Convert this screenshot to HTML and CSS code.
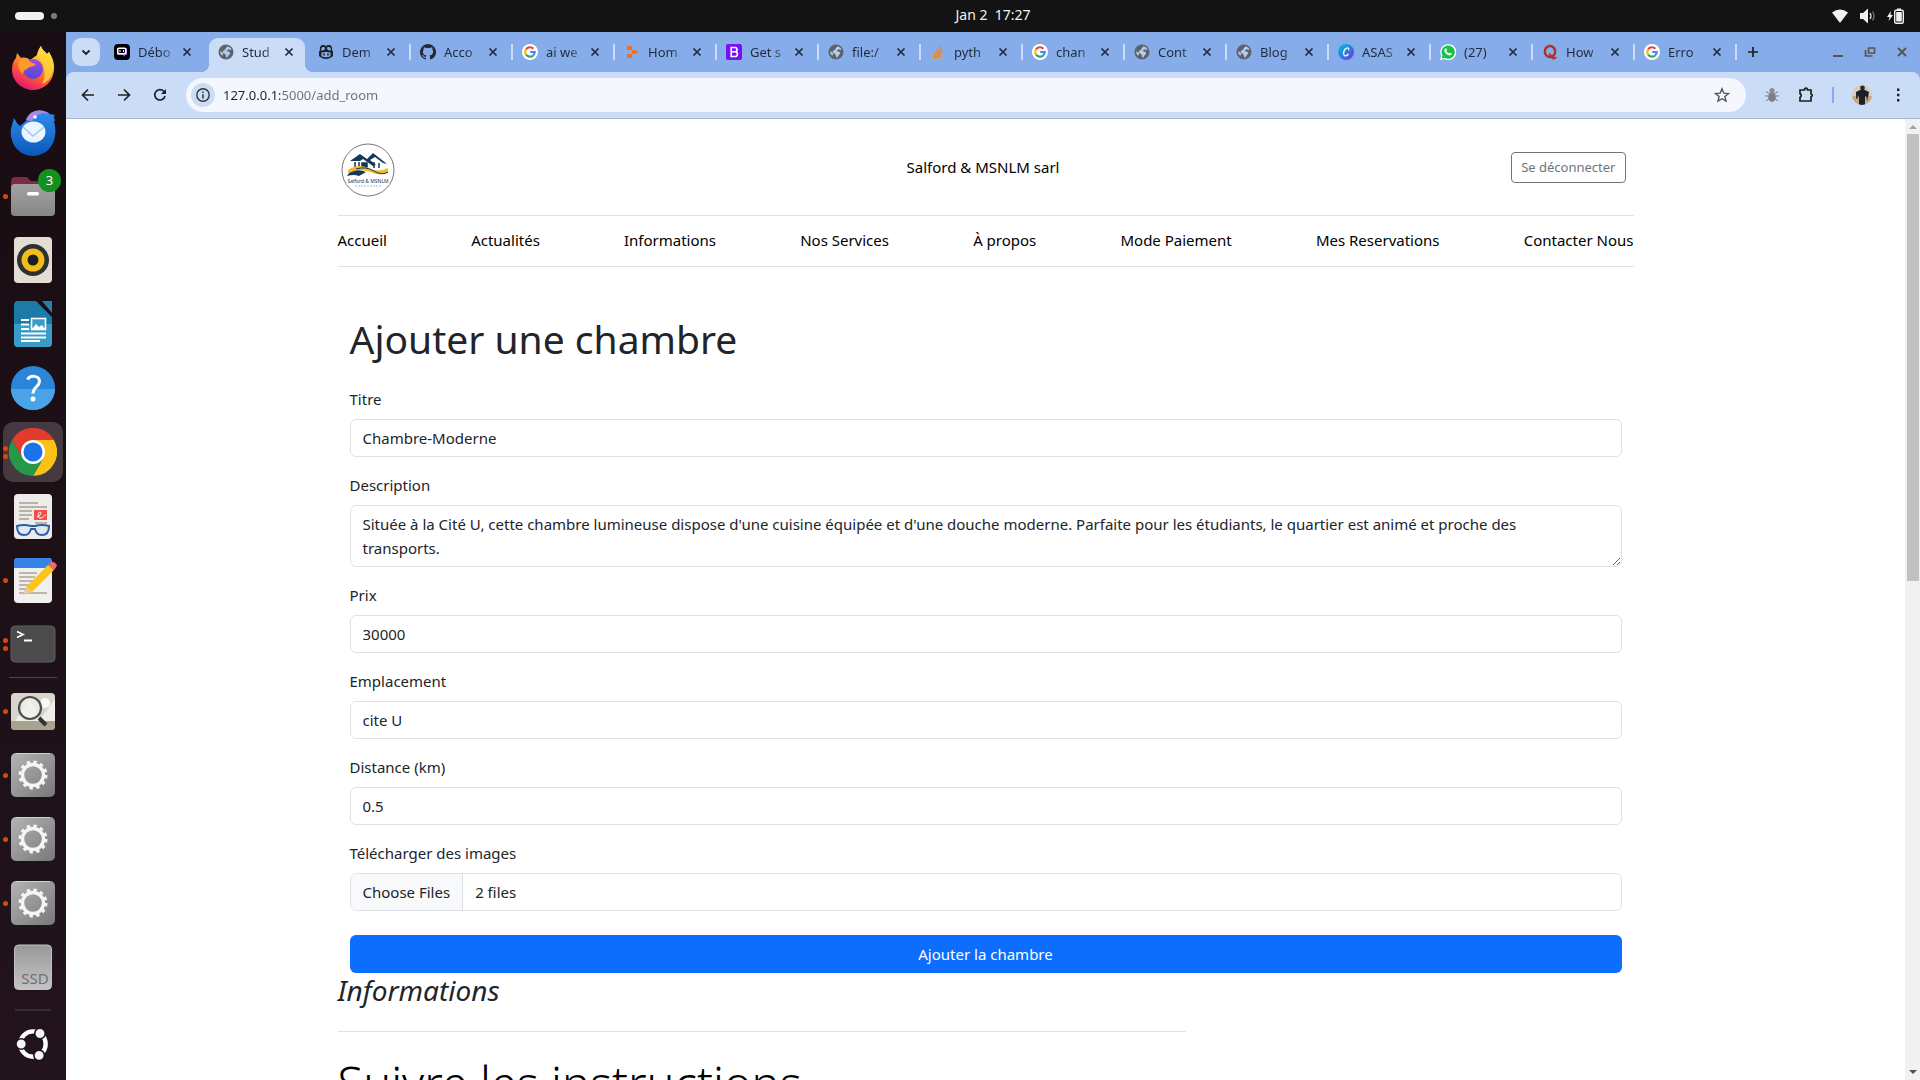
FILE: index.html
```html
<!DOCTYPE html>
<html lang="fr">
<head>
<meta charset="utf-8">
<meta name="viewport" content="width=device-width, initial-scale=1">
<title>Ajouter une chambre</title>
<link rel="stylesheet" href="styles.css">
</head>
<body>
<svg class="defs" aria-hidden="true">
  <defs>
    <linearGradient id="gFire" x1="0.8" y1="0" x2="0.3" y2="1"><stop offset="0" stop-color="#fff44f"/><stop offset=".35" stop-color="#ffb02e"/><stop offset=".65" stop-color="#ff5a36"/><stop offset="1" stop-color="#e3107a"/></linearGradient>
    <linearGradient id="gPurple" x1="0" y1="0" x2="0" y2="1"><stop offset="0" stop-color="#a34be0"/><stop offset="1" stop-color="#4f4ad8"/></linearGradient>
    <linearGradient id="gBird" x1="0" y1="0" x2="0" y2="1"><stop offset="0" stop-color="#2f8df0"/><stop offset="1" stop-color="#0b57b8"/></linearGradient>
    <linearGradient id="gGrey" x1="0" y1="0" x2="1" y2="1"><stop offset="0" stop-color="#b4b4b4"/><stop offset="1" stop-color="#787878"/></linearGradient>
    <linearGradient id="gFolder" x1="0" y1="0" x2="0" y2="1"><stop offset="0" stop-color="#a2a2a2"/><stop offset="1" stop-color="#868686"/></linearGradient>
    <linearGradient id="gSsd" x1="0" y1="0" x2="0" y2="1"><stop offset="0" stop-color="#989898"/><stop offset="1" stop-color="#c4c4c4"/></linearGradient>
    <linearGradient id="gCanva" x1="0" y1="0" x2="1" y2="1"><stop offset="0" stop-color="#00c4cc"/><stop offset=".5" stop-color="#2a80e0"/><stop offset="1" stop-color="#7d2ae8"/></linearGradient>
    <symbol id="globe" viewBox="0 0 16 16"><circle cx="8" cy="8" r="7.500" fill="#5f6368"/><path d="M9 2.200c2 .3 3.700 1.500 4.500 3.300-1 .8-2 .3-2.500-.5-.4.700-1.300.8-2 1.300-.8.700.3 1.200 1.200 1.200 1.300 0 2 .8 1.800 2-.1 1-1 1.200-1.500 2-.4.800-1 2-2.300 2.200.4-1.400-.6-2-.6-3 0-1-1.400-1-2.400-1.800C4 7.800 5.300 6.400 6.500 6c1-.3.6-1.200 1.300-1.800.5-.5 1.400-1 1.200-2zM2.200 7.500c1 .2 2.400.8 2.800 1.900.3.900-.4 1.300-.4 2.400C3 11 2.100 9.300 2.200 7.500z" fill="#b4cbf0"/></symbol>
    <symbol id="google" viewBox="0 0 16 16"><circle cx="8" cy="8" r="8" fill="#fff"/><g fill="none" stroke-width="2.200"><path d="M11.400 4.700A4.700 4.700 0 0 0 4 5.500" stroke="#ea4335"/><path d="M4 5.500a4.700 4.700 0 0 0 0 5" stroke="#fbbc05"/><path d="M4 10.500a4.700 4.700 0 0 0 7 1.100" stroke="#34a853"/><path d="M11 11.600A4.600 4.600 0 0 0 12.700 8H8.200" stroke="#4285f4"/></g></symbol>
    <symbol id="x" viewBox="0 0 16 16"><path d="M4.500 4.500l7 7M11.500 4.500l-7 7" stroke="currentColor" stroke-width="1.700"/></symbol>
    <symbol id="gear" viewBox="0 0 48 48"><rect x="2" y="2" width="44" height="44" rx="5" fill="url(#gGrey)"/><path d="M7 2.500h34" stroke="#d0d0d0"/><circle cx="24" cy="24" r="13" fill="none" stroke="#f6f5f4" stroke-width="3" stroke-dasharray="3.400 3.410"/><circle cx="24" cy="24" r="10.500" fill="none" stroke="#f6f5f4" stroke-width="3.400"/></symbol>
  </defs>
</svg>

<header class="topbar">
  <button class="workspaces" aria-label="Workspaces"><span class="pill"></span><span class="dot"></span></button>
  <time class="clock">Jan 2&nbsp; 17:27</time>
  <div class="status">
    <svg width="18" height="16" viewBox="0 0 18 16"><path d="M1 4.500Q9-1.500 17 4.500L9 15z" fill="#f2f2f2"/></svg>
    <svg width="18" height="16" viewBox="0 0 18 16"><path d="M1 5h3l5-4.500v15L4 11H1z" fill="#f2f2f2"/><path d="M11 5q2 3 0 6" fill="none" stroke="#ddd" stroke-width="1.300"/><path d="M13.500 3.500q3 4.500 0 9" fill="none" stroke="#777" stroke-width="1.300"/></svg>
    <svg width="18" height="16" viewBox="0 0 18 16"><path d="M4 3L0 9h2.500L1.500 13 6 7H3.500z" fill="#f2f2f2"/><rect x="7.700" y="2.200" width="8.600" height="13" rx="1.500" fill="none" stroke="#f2f2f2" stroke-width="1.400"/><path d="M10 .5h4v2h-4zM9.200 4h5.600v9.500H9.200z" fill="#f2f2f2"/></svg>
  </div>
</header>

<div class="desktop">
  <nav class="dock" aria-label="Dock">
    <button class="app" aria-label="Firefox"><svg viewBox="0 0 48 48"><path d="M28 11C29 6 31 3.500 32 2c1 4 4 5 6 8l2-2c3 5 6 11 5 18-1 12-10 20-21 20S3 37 3 26c0-6 2-10 4-12l1-5 4 5c4-1 7 0 9 2z" fill="url(#gFire)"/><path d="M28 11C29 6 31 3.500 32 2c1 4 4 5 6 8l2-2c4 7 6 15 2 24-3 5-6 7-9 8 5-9 3-20-5-29z" fill="#ffd43a" opacity=".8"/><circle cx="24" cy="25" r="10" fill="url(#gPurple)"/><path d="M10 17c6-3 10-1 13 2l4 1c-2 3-6 2-8 4s-5 2-5 6c-4-3-6-8-4-13z" fill="#ff9a2b"/></svg></button>
    <button class="app" aria-label="Thunderbird"><svg viewBox="0 0 48 48"><path d="M18 12c3-9 14-12 22-6l6 1c-2 2-1 3 0 5l-1 2c4 12 0 33-21 34C8 48-2 31 3 17l2-7c2 3 3 6 6 8z" fill="url(#gBird)"/><path d="M17 12C20 2 32-1 41 6c-8-2-14 0-18 7z" fill="#a58ae8"/><circle cx="26" cy="9" r="1.800" fill="#fff"/><ellipse cx="24.500" cy="24" rx="12" ry="10.500" fill="#e9f5ff"/><path d="M14 19l10 9 11-9" fill="none" stroke="#9ccaf0" stroke-width="1.500"/></svg></button>
    <button class="app" aria-label="Fichiers"><svg viewBox="0 0 48 48"><path d="M2 10q0-5 4-5h12l4 4h20q4 0 4 4v10H2z" fill="#7d2a43"/><rect x="2" y="12" width="44" height="32" rx="4" fill="url(#gFolder)"/><rect x="18" y="20" width="12" height="3.500" rx="1.500" fill="#fff"/></svg><span class="badge">3</span><span class="runs"><i></i></span></button>
    <button class="app" aria-label="Rhythmbox"><svg viewBox="0 0 48 48"><rect x="5" y="1" width="38" height="46" rx="4" fill="#e3ddd3"/><circle cx="24" cy="24" r="16" fill="#2e3033"/><circle cx="24" cy="24" r="11.500" fill="#f2bd18"/><circle cx="24" cy="24" r="5.500" fill="#1d1d1f"/></svg></button>
    <button class="app" aria-label="LibreOffice Writer"><svg viewBox="0 0 48 48"><path d="M9 1h18l16 16v26q0 4-4 4H9q-4 0-4-4V5q0-4 4-4z" fill="#1b7aa8"/><path d="M5 24h38v19q0 4-4 4H9q-4 0-4-4z" fill="#3a9cc8"/><path d="M33 1h10v12z" fill="#2483ae"/><path d="M12 20h8m-8 4.500h8m-8 4.500h8m-8 4.500h25M12 37.500h25M12 41h19" stroke="#fff" stroke-width="2"/><rect x="22.500" y="18.500" width="14" height="11" fill="#3a9cc8" stroke="#fff" stroke-width="1.600"/><path d="M23 29l4-5 3 3 3-2 3 4z" fill="#fff"/></svg></button>
    <button class="app" aria-label="Aide"><svg viewBox="0 0 48 48"><circle cx="24" cy="24" r="22" fill="#2b86d9"/><path d="M2 25a22 21 0 0 0 44 0z" fill="#4aa3e8"/><path d="M18.500 15.500C21 11 30.500 11 30.500 17.500c0 5-6.500 5.500-6.500 12" fill="none" stroke="#fff" stroke-width="3"/><circle cx="24" cy="35" r="2.500" fill="#fff"/></svg></button>
    <button class="app current" aria-label="Google Chrome"><svg viewBox="0 0 48 48"><path d="M24 24L3.200 12A24 24 0 0 1 44.800 12z" fill="#e33b2e"/><path d="M24 12h20.800A24 24 0 0 1 24 48l10.400-18z" fill="#fbc116"/><path d="M13.600 30L3.200 12A24 24 0 0 0 24 48l10.400-18z" fill="#279847"/><path d="M3.200 12A24 24 0 0 1 44.800 12H24L13.600 30z" fill="#e33b2e"/><circle cx="24" cy="24" r="12" fill="#fff"/><circle cx="24" cy="24" r="9.500" fill="#1a73e8"/></svg><span class="runs"><i></i><i></i></span></button>
    <button class="app" aria-label="Visionneur de documents"><svg viewBox="0 0 48 48"><rect x="5" y="2" width="38" height="45" rx="4" fill="#eeecea"/><path d="M10 11h19M10 15h28M10 19h13M10 23h13M10 27h10M26 31h12" stroke="#b9b3a6" stroke-width="1.800"/><rect x="25" y="18" width="13" height="10" fill="#f0504a"/><path d="M28 25c4-1 5-5 3-5s-3 7 1 6 2-3 5-3" fill="none" stroke="#fff"/><path d="M8 34q7-2 14 0h4q7-2 14 0c0 6-2 9-7 9s-6-3-7-6h-4c-1 3-2 6-7 6s-7-4-7-9z" fill="#dfe8f2" stroke="#2b5fa8" stroke-width="2"/></svg></button>
    <button class="app" aria-label="Éditeur de texte"><svg viewBox="0 0 48 48"><rect x="5" y="2" width="38" height="45" rx="4" fill="#f1f0ee"/><path d="M5 12V6q0-4 4-4h30q4 0 4 4v6z" fill="#3584e4"/><path d="M10 17h18M10 21h16M10 25h14M10 29h12M10 33h9M10 37h28" stroke="#bdb7aa" stroke-width="1.800"/><path d="M14 39l3-8 6 5z" fill="#e8c9a0"/><path d="M17 31L39 9l6 5-22 22z" fill="#f8c61e"/><path d="M39 9l3-3q3-1 6 3-1 3-3 5z" fill="#ec6a6a"/></svg><span class="runs"><i></i></span></button>
    <button class="app" aria-label="Terminal"><svg viewBox="0 0 48 48"><rect x="2" y="6" width="44" height="36" rx="4" fill="#4b4b4b" stroke="#5e5e5e"/><path d="M8 11.500l6 3-6 3M15 20.500h8" fill="none" stroke="#fff" stroke-width="1.800"/></svg><span class="runs"><i></i><i></i></span></button>
    <hr class="rule">
    <button class="app" aria-label="Visionneur d'images"><svg viewBox="0 0 48 48"><rect x="2" y="6" width="44" height="37" rx="4" fill="#d8d6cc"/><path d="M2 34h44v5q0 4-4 4H6q-4 0-4-4z" fill="#a9a290"/><path d="M6 34l15-22 10 22zM30 34L46 12v22z" fill="#efeee8"/><circle cx="36" cy="16" r="5" fill="#fafaf8"/><circle cx="21" cy="21" r="11" fill="#f2f2ec" fill-opacity=".7" stroke="#4e4e4e" stroke-width="2.200"/><path d="M30 31l7 7" stroke="#333" stroke-width="4"/></svg><span class="runs"><i></i></span></button>
    <button class="app" aria-label="Paramètres"><svg><use href="#gear"/></svg><span class="runs"><i></i></span></button>
    <button class="app" aria-label="Paramètres"><svg><use href="#gear"/></svg><span class="runs"><i></i></span></button>
    <button class="app" aria-label="Paramètres"><svg><use href="#gear"/></svg><span class="runs"><i></i></span></button>
    <button class="app" aria-label="Disque SSD"><svg viewBox="0 0 48 48"><rect x="5.500" y="2" width="37" height="44.500" rx="4" fill="url(#gSsd)" stroke="#c2c2c2"/><text x="26" y="41" class="ssd">SSD</text></svg></button>
    <button class="apps" aria-label="Applications"><svg viewBox="0 0 48 48"><circle cx="24" cy="24" r="14.500" fill="none" stroke="#fff" stroke-width="5"/><g fill="#f4f4f4" stroke="#1e1118" stroke-width="1.800"><circle cx="10.500" cy="24" r="6"/><circle cx="32" cy="12" r="6"/><circle cx="31" cy="37" r="6"/></g></svg></button>
  </nav>

  <div class="browser">
    <div class="tabstrip">
      <button class="search-tabs" aria-label="Rechercher des onglets"><svg width="12" height="12" viewBox="0 0 12 12"><path d="M2.500 4.500L6 8l3.500-3.500" fill="none" stroke="#1f1f1f" stroke-width="1.800"/></svg></button>
      <div class="tabs">
        <div class="tab bare"><svg class="fav" viewBox="0 0 16 16"><rect width="16" height="16" rx="4" fill="#000"/><path d="M3 4h10v7h-2l-1 2-1-2H3z" fill="#8d5bd6"/><rect x="3" y="3.500" width="9.500" height="7" rx="2" fill="#fff"/><rect x="4.500" y="5" width="6.500" height="4" rx="1" fill="#000"/><path d="M6 6v2M9.500 6v2" stroke="#fff"/></svg><a href="#">Débo</a><button aria-label="Fermer"><svg><use href="#x"/></svg></button></div>
        <div class="tab active bare"><svg class="fav"><use href="#globe"/></svg><a href="#">Stud</a><button aria-label="Fermer"><svg><use href="#x"/></svg></button></div>
        <div class="tab"><svg class="fav" viewBox="0 0 16 16"><path d="M1 8.500C1 7 1.800 6.500 2 6 1.500 2.500 3 1 5 1c1.500 0 2.500.5 3 1.200C8.500 1.500 9.500 1 11 1c2 0 3.500 1.500 3 5 .2.500 1 1 1 2.500V12c-2 2-4.500 3-7 3s-5-1-7-3z" fill="#1f2328"/><path d="M4 3.200q3-.8 3 1T4.500 6.500 4 3.200zM12 3.200q-3-.8-3 1t2.500 2.300.5-3.300zM3.500 8.500q4.500-1 9 0v3.700q-4.500 2-9 0z" fill="#86ade9"/><path d="M6 9.500v2M10 9.500v2" stroke="#1f2328" stroke-width="1.500"/></svg><a href="#">Dem</a><button aria-label="Fermer"><svg><use href="#x"/></svg></button></div>
        <div class="tab"><svg class="fav" viewBox="0 0 16 16"><path fill="#24292f" d="M8 0a8 8 0 0 0-2.530 15.590c.4.070.55-.17.550-.38v-1.490c-2.010.37-2.530-.49-2.690-.94-.09-.23-.48-.94-.82-1.130-.28-.15-.68-.52-.01-.53.63-.01 1.080.58 1.230.82.720 1.210 1.870.87 2.330.66.070-.52.280-.87.510-1.070-1.780-.2-3.640-.89-3.640-3.950 0-.87.310-1.590.82-2.150-.08-.2-.36-1.020.080-2.120 0 0 .67-.21 2.200.82a7.400 7.400 0 0 1 4 0c1.530-1.040 2.200-.82 2.200-.82.440 1.100.160 1.920.080 2.120.51.560.82 1.270.82 2.150 0 3.070-1.870 3.750-3.650 3.950.290.250.54.730.54 1.480v2.200c0 .21.150.46.550.38A8 8 0 0 0 8 0z"/></svg><a href="#">Acco</a><button aria-label="Fermer"><svg><use href="#x"/></svg></button></div>
        <div class="tab"><svg class="fav"><use href="#google"/></svg><a href="#">ai we</a><button aria-label="Fermer"><svg><use href="#x"/></svg></button></div>
        <div class="tab"><svg class="fav" viewBox="0 0 16 16"><path d="M3 2h5v4H3zM3 10h5v4H3zM8 6h4v4H8zM12 7h2v2h-2z" fill="#ff6a13"/></svg><a href="#">Hom</a><button aria-label="Fermer"><svg><use href="#x"/></svg></button></div>
        <div class="tab"><svg class="fav" viewBox="0 0 16 16"><rect width="16" height="16" rx="2" fill="#7512f5"/><path d="M5.200 3.500h3.600a2.100 2.100 0 0 1 .3 4.200 2.400 2.400 0 0 1-.2 4.800H5.200zM5.200 7.700h4" fill="none" stroke="#fff" stroke-width="1.600"/></svg><a href="#">Get s</a><button aria-label="Fermer"><svg><use href="#x"/></svg></button></div>
        <div class="tab"><svg class="fav"><use href="#globe"/></svg><a href="#">file:/</a><button aria-label="Fermer"><svg><use href="#x"/></svg></button></div>
        <div class="tab"><svg class="fav" viewBox="0 0 16 16"><path d="M2.500 10v5h9.500v-5" fill="none" stroke="#bcaa80" stroke-width="1.300"/><path d="M4 13h6.500M4.200 10.500l6.300.8M5 7.800l6 2M6.500 5l5 3.700M9 2.500l3.300 5.200" stroke="#f48024" stroke-width="1.300"/></svg><a href="#">pyth</a><button aria-label="Fermer"><svg><use href="#x"/></svg></button></div>
        <div class="tab"><svg class="fav"><use href="#google"/></svg><a href="#">chan</a><button aria-label="Fermer"><svg><use href="#x"/></svg></button></div>
        <div class="tab"><svg class="fav"><use href="#globe"/></svg><a href="#">Cont</a><button aria-label="Fermer"><svg><use href="#x"/></svg></button></div>
        <div class="tab"><svg class="fav"><use href="#globe"/></svg><a href="#">Blog</a><button aria-label="Fermer"><svg><use href="#x"/></svg></button></div>
        <div class="tab"><svg class="fav" viewBox="0 0 16 16"><circle cx="8" cy="8" r="8" fill="url(#gCanva)"/><path d="M10.500 6.200c.8-1.800-.5-2.700-2-2C6 5.300 5 9 6 11c.8 1.500 3 1 4.500-1" fill="none" stroke="#fff" stroke-width="1.300"/></svg><a href="#">ASAS</a><button aria-label="Fermer"><svg><use href="#x"/></svg></button></div>
        <div class="tab"><svg class="fav" viewBox="0 0 16 16"><path d="M0 16l1.200-4.200A8 8 0 1 1 4.200 15z" fill="#fff"/><path d="M1.500 14.500l.9-3.200A6.600 6.600 0 1 1 4.700 13.700z" fill="#16c24a"/><path d="M5 4.500l1.200-.2.900 2-.7.900c.5 1 1.300 1.700 2.400 2.200l.9-.9 2 .9c0 1.500-1.500 2.200-3 1.800C6.500 10.500 4.500 8.500 4.200 6.500z" fill="#fff"/></svg><a href="#">(27)</a><button aria-label="Fermer"><svg><use href="#x"/></svg></button></div>
        <div class="tab"><svg class="fav" viewBox="0 0 16 16"><ellipse cx="8" cy="7.500" rx="5.200" ry="5.500" fill="none" stroke="#b92b27" stroke-width="2.400"/><path d="M7 10c2 0 2.500 4.500 4.500 4.500 1.200 0 2-.7 2-1.700" fill="none" stroke="#b92b27" stroke-width="2"/></svg><a href="#">How</a><button aria-label="Fermer"><svg><use href="#x"/></svg></button></div>
        <div class="tab"><svg class="fav"><use href="#google"/></svg><a href="#">Erro</a><button aria-label="Fermer"><svg><use href="#x"/></svg></button></div>
      </div>
      <button class="new-tab" aria-label="Nouvel onglet"><svg width="14" height="14" viewBox="0 0 14 14"><path d="M7 2v10M2 7h10" stroke="#1f1f1f" stroke-width="1.700"/></svg></button>
      <div class="window-controls">
        <button aria-label="Réduire"><svg width="12" height="12" viewBox="0 0 12 12"><path d="M1 10h10" stroke="#555" stroke-width="2"/></svg></button>
        <button aria-label="Restaurer"><svg width="12" height="12" viewBox="0 0 12 12"><path d="M4.500 2h6v5h-6zM1.500 4v6h7" fill="none" stroke="#555" stroke-width="1.700"/></svg></button>
        <button aria-label="Fermer la fenêtre"><svg width="12" height="12" viewBox="0 0 12 12"><path d="M2 2l8 8M10 2l-8 8" stroke="#555" stroke-width="1.900"/></svg></button>
      </div>
    </div>

    <div class="toolbar">
      <div class="history">
        <button aria-label="Retour"><svg viewBox="0 0 16 16"><path d="M14 8H3M8 2.500L2.500 8 8 13.500" fill="none" stroke="#222" stroke-width="1.700"/></svg></button>
        <button aria-label="Avancer"><svg viewBox="0 0 16 16"><path d="M2 8h11M8 2.500L13.500 8 8 13.500" fill="none" stroke="#222" stroke-width="1.700"/></svg></button>
        <button aria-label="Actualiser"><svg viewBox="0 0 16 16"><path d="M13 9a5.200 5.200 0 1 1-1.200-4.700L13.300 6" fill="none" stroke="#222" stroke-width="1.700"/><path d="M14 2v5H9z" fill="#222"/></svg></button>
      </div>
      <div class="omnibox">
        <button class="site-info" aria-label="Informations sur le site"><svg viewBox="0 0 16 16"><circle cx="8" cy="8" r="6.200" fill="none" stroke="#333" stroke-width="1.400"/><path d="M8 7.200V11.500M8 4.500v1.600" stroke="#333" stroke-width="1.500"/></svg></button>
        <input class="url" type="text" value="127.0.0.1:5000/add_room" aria-label="Adresse">
        <button class="star" aria-label="Favori"><svg viewBox="0 0 16 16"><path d="M8 1.800l1.800 4.300 4.700.4-3.600 3 1.100 4.600L8 11.700l-4 2.400 1.100-4.600-3.600-3 4.700-.4z" fill="none" stroke="#555" stroke-width="1.400"/></svg></button>
      </div>
      <button aria-label="Extension"><svg viewBox="0 0 16 16"><path d="M2 4.500l3 2M14 4.500l-3 2M1 9h3.500M15 9h-3.500M2 14l3-2.500M14 14l-3-2.500" stroke="#777" stroke-width="1"/><ellipse cx="8" cy="10" rx="3.800" ry="5" fill="#7d7f83"/><circle cx="8" cy="3.500" r="2.600" fill="#8a8c90"/></svg></button>
      <button aria-label="Extensions"><svg viewBox="0 0 16 16"><path d="M2 3h4.500V2q1.500-1.500 3 0v1H13v4q2.500 1 0 3v4H2v-3.500q2.500-1.800 0-4z" fill="none" stroke="#1f1f1f" stroke-width="1.700"/></svg></button>
      <span class="split"></span>
      <button class="profile" aria-label="Profil"><svg viewBox="0 0 20 20"><clipPath id="cp"><circle cx="10" cy="10" r="10"/></clipPath><g clip-path="url(#cp)"><path d="M0 0h20v20H0z" fill="#d9cdbb"/><path d="M0 11h20v9H0z" fill="#c4a988"/><path d="M4 7l4-2h5l4 2-1 6-3-2v9H7v-9l-3 3z" fill="#1c2029"/><circle cx="10.500" cy="3" r="2.400" fill="#3a2419"/><path d="M4 11l2-1v4zM14 11l2 3-1 2z" fill="#5b3927"/></g></svg></button>
      <button aria-label="Menu"><svg viewBox="0 0 16 16"><path d="M7 1.500h2.400v2.400H7zM7 6.800h2.400v2.400H7zM7 12.100h2.400v2.400H7z" fill="#1f1f1f"/></svg></button>
    </div>

    <div class="viewport">
      <div class="page">
        <header class="site-head">
          <a class="logo" href="#" aria-label="Salford &amp; MSNLM"><svg viewBox="0 0 54 54"><circle cx="27" cy="27" r="26" fill="#fff" stroke="#777"/><path d="M9 18l10-7 7 5 6-6 14 11-4-1-8-6-5 3 6 5-3 1-10-7-3 2z" fill="#16365a"/><path d="M14 19v6M18 19v6M33 19v6M38 20v5M21 20h5v4h-5z" stroke="#16365a" stroke-width="1.500" fill="#16365a"/><path d="M7 27q10-7 20-2t20 0v5q-9 3-18-1t-22 1z" fill="#f5b921"/><path d="M8 30q9-5 17-1l-7 4q-5-2-12 0z" fill="#16365a"/><path d="M15 26q10-3 18 2t14 1" stroke="#16365a" fill="none"/><text x="27" y="40" class="logo-name">Salford &amp; MSNLM</text><path d="M14 43h26" stroke="#b4bcc6" stroke-dasharray="2 1"/></svg></a>
          <a class="brand" href="#">Salford &amp; MSNLM sarl</a>
          <div class="head-end"><button class="logout">Se déconnecter</button></div>
        </header>
        <nav class="site-nav">
          <a href="#">Accueil</a><a href="#">Actualités</a><a href="#">Informations</a><a href="#">Nos Services</a><a href="#">À propos</a><a href="#">Mode Paiement</a><a href="#">Mes Reservations</a><a href="#">Contacter Nous</a>
        </nav>
        <main class="room">
          <h1>Ajouter une chambre</h1>
          <form>
            <div class="field"><label for="title">Titre</label><input id="title" type="text" value="Chambre-Moderne"></div>
            <div class="field"><label for="desc">Description</label><textarea id="desc" rows="2">Située à la Cité U, cette chambre lumineuse dispose d'une cuisine équipée et d'une douche moderne. Parfaite pour les étudiants, le quartier est animé et proche des transports.</textarea></div>
            <div class="field"><label for="price">Prix</label><input id="price" type="text" inputmode="numeric" value="30000"></div>
            <div class="field"><label for="place">Emplacement</label><input id="place" type="text" value="cite U"></div>
            <div class="field"><label for="dist">Distance (km)</label><input id="dist" type="text" inputmode="decimal" value="0.5"></div>
            <div class="field"><label for="pics">Télécharger des images</label><input id="pics" type="file" multiple></div>
            <button class="submit" type="submit">Ajouter la chambre</button>
          </form>
        </main>
        <section class="info">
          <h3>Informations</h3>
          <h2>Suivre les instructions</h2>
        </section>
      </div>
      <div class="scrollbar" aria-hidden="true"><svg width="15" height="15" viewBox="0 0 15 15"><path d="M4 10l4-4 4 4z" fill="#a3a3a3"/></svg><div class="track"><div class="thumb"></div></div><svg width="15" height="15" viewBox="0 0 15 15"><path d="M4 5l4 4 4-4z" fill="#505050"/></svg></div>
    </div>
  </div>
</div>
<script src="app.js"></script>
</body>
</html>
```
FILE: styles.css
```css
*, *::before, *::after { box-sizing: border-box; }

body {
  margin: 0;
  height: 100vh;
  display: flex;
  flex-direction: column;
  overflow: hidden;
  background: #fff;
  color: #212529;
  font: 15px/24px "Noto Sans", "Open Sans", sans-serif;
}

button, input, textarea { font: inherit; color: inherit; margin: 0; }
button { border: 0; padding: 0; background: none; }
a { color: inherit; text-decoration: none; }
h1, h2, h3 { margin: 0; }
svg { display: block; }
.defs { position: absolute; width: 0; height: 0; }

/* System bar */
.topbar {
  flex: none;
  display: grid;
  grid-template-columns: 66px 1fr auto 1fr;
  align-items: center;
  height: 32px;
  background: #131313;
  color: #f2f2f2;
  font-size: 14px;
}
.workspaces { display: flex; align-items: center; gap: 7px; padding-left: 15px; }
.pill { width: 29px; height: 8px; border-radius: 4px; background: #f2f2f2; }
.dot { width: 6px; height: 6px; border-radius: 3px; background: #7d7d7d; }
.clock { grid-column: 3; line-height: 30px; padding-bottom: 2px; }
.status { display: flex; justify-content: flex-end; gap: 10px; padding-right: 15px; }

.desktop { flex: 1; min-height: 0; display: flex; }

/* Dock */
.dock {
  flex: none;
  width: 66px;
  display: flex;
  flex-direction: column;
  align-items: center;
  gap: 4px;
  padding: 6px 0 0;
  background: linear-gradient(#180d12, #22131c);
}
.app {
  position: relative;
  flex: none;
  width: 60px;
  height: 60px;
  display: grid;
  place-items: center;
  border-radius: 10px;
}
.app > svg { width: 48px; height: 48px; }
.app.current { background: #443a3f; }
.runs {
  position: absolute;
  left: 0;
  top: 0;
  bottom: 0;
  display: flex;
  flex-direction: column;
  justify-content: center;
  gap: 3px;
}
.runs i { width: 5px; height: 5px; border-radius: 50%; background: #d9480f; }
.badge {
  position: absolute;
  top: 3px;
  right: 2px;
  width: 23px;
  height: 23px;
  border-radius: 50%;
  background: #12911f;
  color: #fff;
  font-size: 13px;
  line-height: 23px;
}
.rule { flex: none; width: 48px; height: 1px; margin: -1px 0; border: 0; background: #4f464b; }
.ssd { font-size: 15px; text-anchor: middle; fill: #707070; }
.apps {
  flex: none;
  width: 60px;
  height: 70px;
  margin-top: 8px;
  display: grid;
  place-items: center;
  background: linear-gradient(#3a2c34, #3a2c34) top / 36px 2px no-repeat;
}
.apps svg { width: 42px; height: 42px; }

/* Browser frame */
.browser { flex: 1; min-width: 0; display: flex; flex-direction: column; }
.tabstrip {
  flex: none;
  display: flex;
  align-items: center;
  height: 48px;
  margin-bottom: -8px;
  padding: 0 8px 8px 6px;
  background: #86ade9;
}
.search-tabs {
  flex: none;
  width: 28px;
  height: 28px;
  margin-right: 4px;
  display: grid;
  place-items: center;
  border-radius: 9px;
  background: #cbdcf6;
}
.tabs { display: flex; min-width: 0; align-self: stretch; padding-top: 6px; }
.tab {
  flex: 0 1 auto;
  width: 102px;
  min-width: 0;
  position: relative;
  display: flex;
  align-items: center;
  padding: 0 11px 6px 10px;
  font-size: 13px;
  color: #1f2a3c;
}
.tab:not(.bare)::after {
  content: "";
  position: absolute;
  right: -1px;
  top: 6px;
  width: 2px;
  height: 16px;
  background: #cbdcf6;
}
.tab.active { width: 96px; margin: 0 3px; padding: 0 8px 6px 9px; border-radius: 9px 9px 0 0; background: #cbdcf6; }
.tab.active::before, .tab.active::after {
  content: "";
  position: absolute;
  bottom: 0;
  left: -8px;
  width: 8px;
  height: 8px;
  background: radial-gradient(circle at 0 0, #86ade9 8px, #cbdcf6 8px);
}
.tab.active::after { left: auto; right: -8px; background: radial-gradient(circle at 100% 0, #86ade9 8px, #cbdcf6 8px); }
.fav { flex: none; width: 16px; height: 16px; margin-right: 8px; }
.tab a {
  flex: 1;
  min-width: 0;
  white-space: nowrap;
  -webkit-mask-image: linear-gradient(90deg, #000 60%, rgba(0, 0, 0, .2));
  mask-image: linear-gradient(90deg, #000 60%, rgba(0, 0, 0, .2));
}
.tab button { flex: none; margin-left: 4px; }
.tab button svg { width: 16px; height: 16px; }
.new-tab { flex: none; margin-left: 10px; }
.window-controls { margin-left: auto; padding-right: 4px; display: flex; gap: 20px; }

.toolbar {
  flex: none;
  position: relative;
  display: flex;
  align-items: center;
  gap: 18px;
  height: 47px;
  padding: 0 14px;
  border-bottom: 1px solid #a4b5d2;
  border-radius: 8px 8px 0 0;
  background: #cbdcf6;
}
.history { display: flex; gap: 20px; }
.toolbar button svg { width: 16px; height: 16px; }
.toolbar .profile svg { width: 20px; height: 20px; }
.split { width: 2px; height: 16px; background: #86ade9; }
.omnibox {
  flex: 1;
  display: flex;
  align-items: center;
  gap: 8px;
  height: 34px;
  padding: 0 16px 0 5px;
  border-radius: 17px;
  background: #f4f7fd;
}
.site-info {
  width: 24px;
  height: 24px;
  display: grid;
  place-items: center;
  border-radius: 50%;
  background: #cbdcf6;
}
.url {
  flex: 1;
  min-width: 0;
  border: 0;
  padding: 0;
  outline: 0;
  font-size: 13px;
  background: linear-gradient(90deg, #202124 57px, #6b6f75 57px);
  -webkit-background-clip: text;
  background-clip: text;
  -webkit-text-fill-color: transparent;
}

/* Web page */
.viewport { flex: 1; min-height: 0; display: flex; background: #fff; }
.page { flex: 1; min-width: 0; overflow: hidden; }
.site-head, .site-nav, .room, .info {
  max-width: 1296px;
  margin: 0 auto;
}
.site-head {
  display: grid;
  grid-template-columns: 1fr auto 1fr;
  align-items: center;
  height: 97px;
  padding: 0 8px 0 3px;
  border-bottom: 1px solid #dee2e6;
  color: #000;
}
.logo svg { width: 54px; height: 54px; margin-top: 6px; }
.logo-name { font-size: 5px; text-anchor: middle; fill: #16365a; }
.head-end { display: flex; justify-content: flex-end; }
.logout {
  height: 31px;
  padding: 0 9px;
  border: 1px solid #6c757d;
  border-radius: 4px;
  color: #6c757d;
  font-size: 13px;
}
.site-nav {
  display: flex;
  justify-content: space-between;
  padding: 12px 0 14px;
  border-bottom: 1px solid #dee2e6;
  color: #000;
}
.room { padding: 48px 12px 0; }
.room h1 { margin-bottom: 24px; font-size: 39px; line-height: 48px; font-weight: 400; }
.field { margin-bottom: 16px; }
.field label { display: block; margin-bottom: 8px; }
.field input, .field textarea {
  display: block;
  width: 100%;
  height: 38px;
  padding: 6px 12px;
  border: 1px solid #dee2e6;
  border-radius: 6px;
  background: #fff;
}
.field textarea { height: 62px; padding-right: 40px; resize: vertical; }
.field input[type="file"] { overflow: hidden; }
.field input::file-selector-button {
  margin: -6px 12px -6px -12px;
  padding: 6px 12px;
  border: 0 solid #dee2e6;
  border-right-width: 1px;
  background: #f8f9fa;
  color: #212529;
  font: inherit;
}
.submit {
  width: 100%;
  height: 38px;
  margin-top: 8px;
  border-radius: 6px;
  background: #0d6efd;
  color: #fff;
}
.info h3 {
  max-width: 848px;
  padding-bottom: 24px;
  border-bottom: 1px solid #dee2e6;
  font-size: 28px;
  line-height: 34px;
  font-weight: 400;
  font-style: italic;
}
.info h2 {
  margin-top: 24px;
  color: #000;
  font-size: 47px;
  line-height: 54px;
  font-weight: 300;
}

.scrollbar { flex: none; width: 15px; display: flex; flex-direction: column; background: #f1f1f1; }
.track { flex: 1; padding: 0 1px 0 2px; }
.thumb { height: 48%; background: #c1c1c1; }
```
FILE: app.js
```js
const picked = new DataTransfer();
["chambre-1.jpg", "chambre-2.jpg"].forEach((name) => picked.items.add(new File([""], name)));
document.getElementById("pics").files = picked.files;
```
